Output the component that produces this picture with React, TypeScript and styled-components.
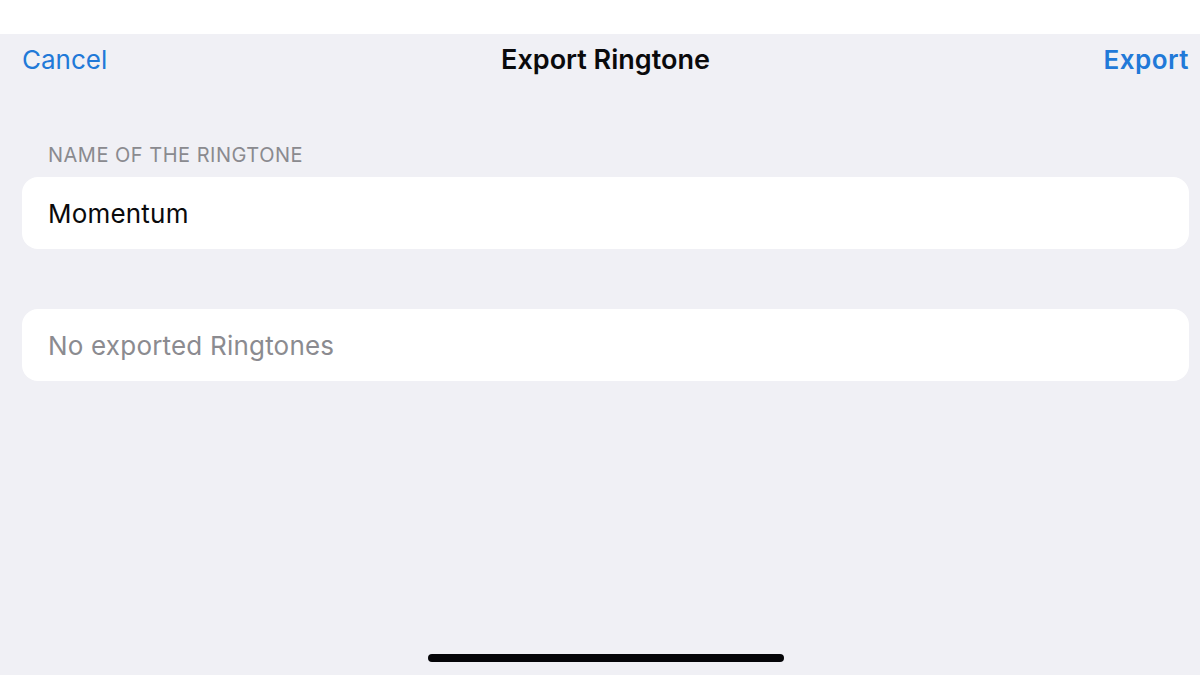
import styled, { createGlobalStyle } from "styled-components";

const GlobalStyle = createGlobalStyle`
	html, body {
		margin: 0;
		padding: 0;
		background: #ffffff;
	}
	body {
		font-family: "Inter", "Liberation Sans", sans-serif;
		-webkit-font-smoothing: antialiased;
	}
`;

export default function App() {
	return (
		<>
			<GlobalStyle />
			<Screen>
				<TopBand />
				<Sheet>
					<NavBar>
						<NavButton>Cancel</NavButton>
						<NavTitle>Export Ringtone</NavTitle>
						<NavButton bold>Export</NavButton>
					</NavBar>

					<Section>
						<SectionHeader>Name of the ringtone</SectionHeader>
						<Card>
							<CardText>Momentum</CardText>
						</Card>
					</Section>

					<Section>
						<Card>
							<CardText muted>No exported Ringtones</CardText>
						</Card>
					</Section>

					<Spacer />
					<HomeIndicator />
				</Sheet>
			</Screen>
		</>
	);
}

const Screen = styled.div`
	width: 1200px;
	height: 675px;
	display: flex;
	flex-direction: column;
	overflow: hidden;
`;

const TopBand = styled.div`
	height: 34px;
	background: #ffffff;
	flex-shrink: 0;
`;

const Sheet = styled.div`
	flex: 1;
	display: flex;
	flex-direction: column;
	background: #f0f0f5;
	padding: 0 11px 0 22px;
`;

const NavBar = styled.div`
	display: flex;
	align-items: center;
	justify-content: space-between;
	height: 50px;
	position: relative;
`;

const NavButton = styled.span<{ bold?: boolean }>`
	color: #2179d8;
	font-size: 26px;
	font-weight: ${(p) => (p.bold ? 600 : 400)};
	letter-spacing: ${(p) => (p.bold ? "0.5px" : "0")};
`;

const NavTitle = styled.span`
	position: absolute;
	left: 50%;
	transform: translateX(-50%);
	color: #0a0a0c;
	font-size: 27px;
	font-weight: 600;
`;

const Section = styled.section`
	display: flex;
	flex-direction: column;
	margin-top: 60px;

	& + & {
		margin-top: 60px;
	}
`;

const SectionHeader = styled.div`
	padding-left: 26px;
	margin-bottom: 11px;
	color: #8a8a8f;
	font-size: 20px;
	letter-spacing: 0.5px;
	text-transform: uppercase;
	line-height: 22px;
`;

const Card = styled.div`
	height: 72px;
	display: flex;
	align-items: center;
	padding: 0 26px;
	background: #ffffff;
	border-radius: 16px;
`;

const CardText = styled.span<{ muted?: boolean }>`
	color: ${(p) => (p.muted ? "#8b8b90" : "#0a0a0c")};
	font-size: 26px;
	letter-spacing: 0.2px;
`;

const Spacer = styled.div`
	flex: 1;
`;

const HomeIndicator = styled.div`
	align-self: center;
	width: 356px;
	height: 8px;
	border-radius: 4px;
	background: #050508;
	margin-bottom: 13px;
`;
